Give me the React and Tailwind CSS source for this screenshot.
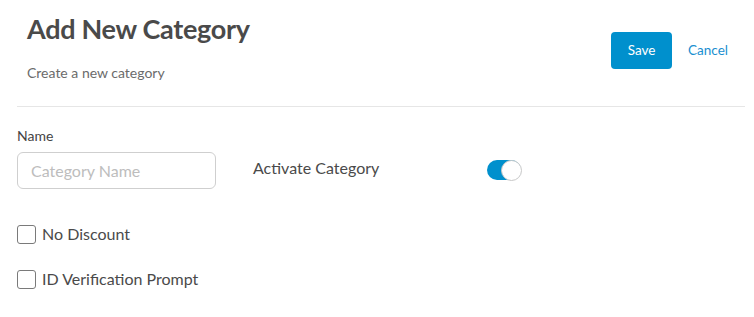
export default function App() {
  return (
    <div className="w-[754px] h-[317px] bg-white font-['Lato',sans-serif] text-[#444] overflow-hidden">
      <div className="flex justify-between pl-[27px] pr-[26px] pt-[12px] h-[106px]">
        <div>
          <h1 className="text-[27px] font-bold text-[#4a4a4a] leading-[34px] tracking-[-0.3px]">Add New Category</h1>
          <p className="mt-[17px] text-[14px] text-[#6b6b6b] leading-[20px]">Create a new category</p>
        </div>
        <div className="flex items-start pt-[20px] gap-[16px]">
          <button className="w-[61px] h-[37px] rounded-[4px] bg-[#0090cd] text-white text-[13.5px]">Save</button>
          <button className="h-[37px] text-[13.5px] text-[#1a8fd0]">Cancel</button>
        </div>
      </div>
      <div className="mx-[17px] border-t border-[#e6e6e6] w-[728px]" />
      <div className="px-[17px] pt-[20px]">
        <div className="text-[14px] text-[#444] leading-[18px]">Name</div>
        <div className="flex items-start mt-[7px]">
          <input
            placeholder="Category Name"
            className="w-[199px] h-[37px] border border-[#cfcfcf] rounded-[6px] px-[13px] text-[16px] placeholder:text-[#bdbdbd] outline-none"
          />
          <span className="ml-[37px] mt-[6px] text-[16px] leading-[20px] text-[#4a4a4a]">Activate Category</span>
          <div className="ml-[108px] mt-[8px] relative w-[34px] h-[20px] rounded-full bg-[#0090cd]">
            <div className="absolute right-[-1px] top-[-0.5px] w-[21px] h-[21px] rounded-full bg-white border border-[#c8c8c8]" />
          </div>
        </div>
        <div className="mt-[33px] flex items-center gap-[6px]">
          <div className="w-[19px] h-[19px] rounded-[3px] border border-[#7a7a7a]" />
          <span className="text-[16px] text-[#4a4a4a]">No Discount</span>
        </div>
        <div className="mt-[21px] flex items-center gap-[6px]">
          <div className="w-[19px] h-[19px] rounded-[3px] border border-[#7a7a7a]" />
          <span className="text-[16px] text-[#4a4a4a]">ID Verification Prompt</span>
        </div>
      </div>
    </div>
  );
}
